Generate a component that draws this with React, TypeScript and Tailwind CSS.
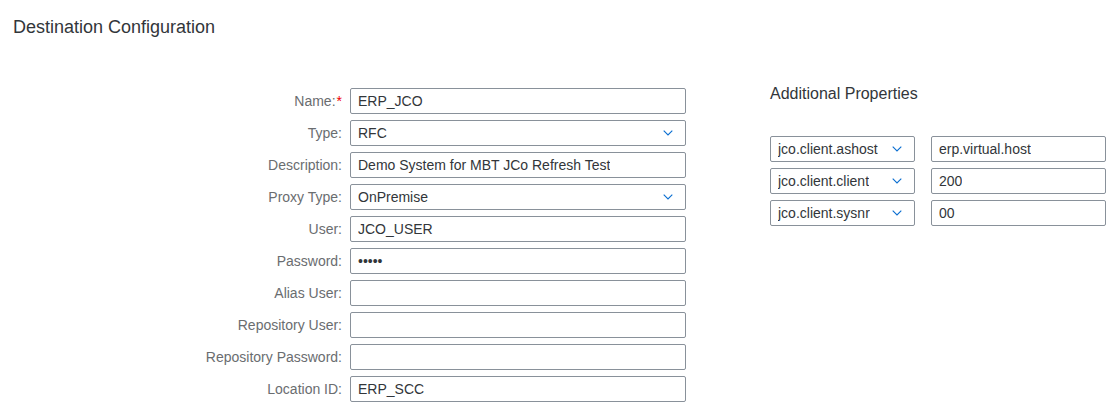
const fields = [
  { label: "Name:", value: "ERP_JCO", required: true },
  { label: "Type:", value: "RFC", select: true },
  { label: "Description:", value: "Demo System for MBT JCo Refresh Test" },
  { label: "Proxy Type:", value: "OnPremise", select: true },
  { label: "User:", value: "JCO_USER" },
  { label: "Password:", value: "•••••" },
  { label: "Alias User:", value: "" },
  { label: "Repository User:", value: "" },
  { label: "Repository Password:", value: "" },
  { label: "Location ID:", value: "ERP_SCC" },
];

const props = [
  { key: "jco.client.ashost", value: "erp.virtual.host" },
  { key: "jco.client.client", value: "200" },
  { key: "jco.client.sysnr", value: "00" },
];

const Chevron = () => (
  <svg width="10" height="6" viewBox="0 0 10 6" className="shrink-0">
    <polyline
      points="0.7,0.7 5,5 9.3,0.7"
      fill="none"
      stroke="#0a6ed1"
      strokeWidth="1.1"
    />
  </svg>
);

const Field = ({
  value,
  select,
  width,
}: {
  value: string;
  select?: boolean;
  width: string;
}) => (
  <div
    className={`${width} h-[26px] border border-[#89919a] rounded-[2px] bg-white flex items-center justify-between pl-[7px] text-[14px] text-[#32363a]`}
  >
    <span className="truncate">{value}</span>
    {select && (
      <span className="pr-[12px]">
        <Chevron />
      </span>
    )}
  </div>
);

export default function App() {
  return (
    <div className="w-[1114px] h-[409px] bg-white font-['Liberation_Sans',Arial,sans-serif] overflow-hidden">
      <h1 className="pl-[13px] pt-[16px] text-[18px] leading-[22px] text-[#32363a]">
        Destination Configuration
      </h1>

      <div className="flex items-start mt-[46px]">
        {/* left form */}
        <div className="pt-[4px] grid grid-cols-[342px_336px] gap-x-[8px] gap-y-[6px]">
          {fields.map((f) => (
            <div key={f.label} className="contents">
              <div className="flex items-center justify-end text-[14px] text-[#6a6d70]">
                {f.label}
                {f.required && <span className="text-[#e00] ml-[1px]">*</span>}
              </div>
              <Field
                value={f.value}
                select={f.select}
                width="w-[336px]"
              />
            </div>
          ))}
        </div>

        {/* additional properties */}
        <div className="ml-[84px]">
          <h2 className="text-[16px] leading-[20px] text-[#32363a]">
            Additional Properties
          </h2>
          <div className="mt-[32px] flex flex-col gap-[6px]">
            {props.map((p) => (
              <div key={p.key} className="flex gap-[16px]">
                <Field value={p.key} select width="w-[145px]" />
                <Field value={p.value} width="w-[175px]" />
              </div>
            ))}
          </div>
        </div>
      </div>
    </div>
  );
}
